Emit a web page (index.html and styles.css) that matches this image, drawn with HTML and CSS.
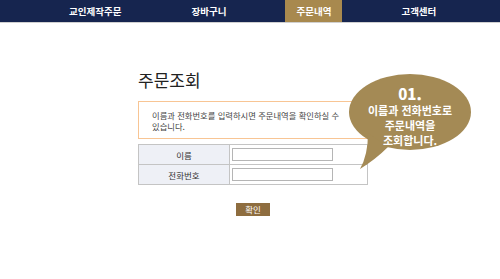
FILE: index.html
```html
<!DOCTYPE html>
<html lang="ko">
<head>
    <meta charset="UTF-8">
    <meta name="viewport" content="width=device-width, initial-scale=1.0">
    <title>주문조회</title>
    <link rel="stylesheet" href="styles.css">
</head>
<body>

<nav class="top-nav">
    <ul class="menu">
        <li>교인제작주문</li>
        <li>장바구니</li>
        <li class="active">주문내역</li>
        <li>고객센터</li>
    </ul>
</nav>

<div class="content">
    <h1>주문조회</h1>

    <div class="info-box">
        이름과 전화번호를 입력하시면 주문내역을 확인하실 수 있습니다.
    </div>

    <table class="search-table">
        <tr>
            <th>이름</th>
            <td><input type="text" class="field"></td>
        </tr>
        <tr>
            <th>전화번호</th>
            <td><input type="text" class="field"></td>
        </tr>
    </table>

    <div class="actions">
        <button class="confirm-button">확인</button>
    </div>

    <!-- 말풍선 안내 -->
    <div class="bubble">
        <svg class="bubble-shape" width="130" height="100" viewBox="0 0 130 100">
            <ellipse cx="64" cy="39" rx="61" ry="38" fill="#a48a55"/>
            <path d="M22 60 Q22 82 14 96 Q30 86 42 74 Z" fill="#a48a55"/>
        </svg>
        <div class="bubble-text">
            <strong>01.</strong>
            <span>이름과 전화번호로<br>주문내역을<br>조회합니다.</span>
        </div>
    </div>
</div>

</body>
</html>
```

FILE: styles.css
```css
body {
    margin: 0;
    font-family: "Noto Sans CJK KR", "Noto Sans", sans-serif;
    background-color: #fff;
    color: #333;
}

.top-nav {
    background-color: #16254f;
    height: 22px;
    border-bottom: 1px solid #d0d0d0;
}

.menu {
    list-style: none;
    margin: 0;
    padding: 0 0 0 58px;
    display: flex;
    gap: 48px;
    height: 22px;
}

.menu li {
    padding: 0 11px;
    line-height: 22px;
    font-size: 9.5px;
    font-weight: bold;
    color: #fff;
}

.menu li.active {
    background-color: #a8894e;
}

.content {
    position: relative;
    width: 231px;
    margin-left: 138px;
    padding-top: 46px;
}

h1 {
    margin: 0 0 10px;
    font-size: 17px;
    font-weight: normal;
    line-height: 22px;
    color: #222;
}

.info-box {
    border: 1px solid #f8c594;
    padding: 8px 20px 6px 13px;
    font-size: 8.3px;
    line-height: 11px;
    color: #444;
    height: 22px;
}

.search-table {
    margin-top: 5px;
    width: 230px;
    border-collapse: collapse;
    border: 1px solid #bdbdbd;
}

.search-table th {
    width: 90px;
    height: 19px;
    padding: 0;
    background-color: #eef0f6;
    border: 1px solid #c4c4c4;
    font-size: 8.5px;
    font-weight: normal;
    color: #333;
}

.search-table td {
    padding: 0 0 0 2px;
    border: 1px solid #c4c4c4;
}

.field {
    display: block;
    width: 101px;
    height: 13px;
    box-sizing: border-box;
    border: 1px solid #b5b5b5;
    padding: 0;
}

.actions {
    display: flex;
    justify-content: center;
    margin-top: 18px;
}

.confirm-button {
    background-color: #8e6d3f;
    color: #fff;
    border: none;
    padding: 0;
    width: 34px;
    height: 13px;
    font-family: inherit;
    font-size: 8.5px;
    line-height: 13px;
    margin-left: -1px;
}

.bubble {
    position: absolute;
    left: 208px;
    top: 50px;
    width: 130px;
    height: 100px;
}

.bubble-shape {
    display: block;
}

.bubble-text {
    position: absolute;
    left: 3px;
    top: 12px;
    width: 122px;
    text-align: center;
    color: #fff;
    font-weight: bold;
}

.bubble-text strong {
    display: block;
    font-size: 15px;
    line-height: 18px;
}

.bubble-text span {
    display: block;
    font-size: 11px;
    line-height: 15px;
}
```
